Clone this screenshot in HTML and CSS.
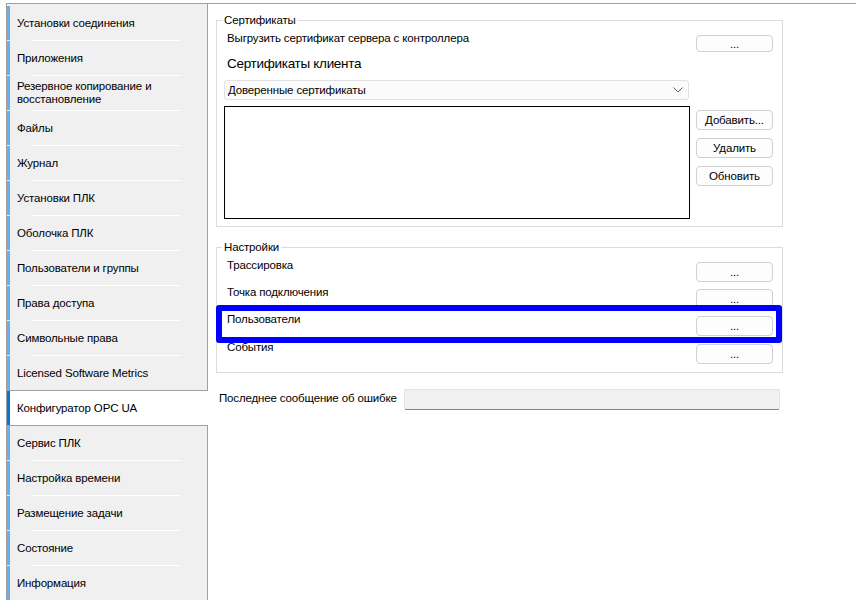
FILE: index.html
```html
<!DOCTYPE html>
<html lang="ru">
<head>
<meta charset="utf-8">
<link rel="stylesheet" href="styles.css">
</head>
<body>
<div class="frame">
  <nav class="sidebar">
    <div class="item">Установки соединения</div>
    <div class="item">Приложения</div>
    <div class="item">Резервное копирование и<br>восстановление</div>
    <div class="item">Файлы</div>
    <div class="item">Журнал</div>
    <div class="item">Установки ПЛК</div>
    <div class="item">Оболочка ПЛК</div>
    <div class="item">Пользователи и группы</div>
    <div class="item">Права доступа</div>
    <div class="item">Символьные права</div>
    <div class="item">Licensed Software Metrics</div>
    <div class="item selected">Конфигуратор OPC UA</div>
    <div class="item">Сервис ПЛК</div>
    <div class="item">Настройка времени</div>
    <div class="item">Размещение задачи</div>
    <div class="item">Состояние</div>
    <div class="item">Информация</div>
  </nav>
  <main class="content">
    <section class="group group-certs">
      <div class="group-title">Сертификаты</div>
      <div class="row">
        <span class="label">Выгрузить сертификат сервера с контроллера</span>
        <button class="btn btn-dots">...</button>
      </div>
      <div class="subtitle">Сертификаты клиента</div>
      <div class="select">
        <span>Доверенные сертификаты</span>
        <svg class="chev" width="10" height="6" viewBox="0 0 10 6"><path d="M0.5 0.5 L5 5 L9.5 0.5" fill="none" stroke="#5a5a5a" stroke-width="1"/></svg>
      </div>
      <div class="listrow">
        <div class="listbox"></div>
        <div class="btncol">
          <button class="btn btn-tall">Добавить...</button>
          <button class="btn btn-tall">Удалить</button>
          <button class="btn btn-tall">Обновить</button>
        </div>
      </div>
    </section>

    <section class="group group-settings">
      <div class="group-title">Настройки</div>
      <div class="row srow">
        <span class="label">Трассировка</span>
        <button class="btn btn-set">...</button>
      </div>
      <div class="row srow">
        <span class="label">Точка подключения</span>
        <button class="btn btn-set">...</button>
      </div>
      <div class="row srow">
        <span class="label">Пользователи</span>
        <button class="btn btn-set">...</button>
      </div>
      <div class="row srow srow-last">
        <span class="label">События</span>
        <button class="btn btn-set">...</button>
      </div>
    </section>

    <div class="errrow">
      <span class="errlabel">Последнее сообщение об ошибке</span>
      <div class="errfield"></div>
    </div>

    <div class="highlight"></div>
  </main>
</div>
</body>
</html>
```

FILE: styles.css
```css
* { box-sizing: border-box; }
html, body { margin: 0; padding: 0; background: #fff; }
body {
  font-family: "Liberation Sans", Arial, sans-serif;
  font-size: 11.5px;
  letter-spacing: -0.15px;
  color: #000;
  width: 856px;
  height: 600px;
  overflow: hidden;
}
.frame {
  margin: 3px 0 0 6px;
  border-top: 1px solid #a0a0a0;
  border-left: 1px solid #a0a0a0;
  display: flex;
  height: 597px;
}
.sidebar {
  width: 201px;
  flex: none;
  background: #f0f0f0;
  border-right: 1px solid #a0a0a0;
  padding-top: 2px;
  display: flex;
  flex-direction: column;
}
.item {
  height: 35px;
  flex: none;
  padding: 0 0 1px 10px;
  display: flex;
  align-items: center;
  line-height: 13px;
  white-space: nowrap;
  background:
    linear-gradient(#fff, #fff) 25px 100% / 149px 1px no-repeat,
    linear-gradient(#6aaef0, #6aaef0) 0 0 / 3px 34px no-repeat;
}
.item.selected {
  margin: -1px -1px 0 0;
  height: 36px;
  padding-bottom: 0;
  border-top: 1px solid #a0a0a0;
  border-bottom: 1px solid #a0a0a0;
  background:
    linear-gradient(#0078d7, #0078d7) 0 0 / 3px 34px no-repeat,
    #fff;
}
.content {
  flex: 1;
  position: relative;
  background: #fff;
}
.group {
  margin-left: 8px;
  width: 567px;
  border: 1px solid #dcdcdc;
  padding: 0 9px 0 7px;
  display: flex;
  flex-direction: column;
}
.group-certs { margin-top: 16px; padding-bottom: 7px; }
.group-settings { margin-top: 20px; padding-bottom: 8px; }
.group-title {
  align-self: flex-start;
  margin: -8px 0 0 -2px;
  padding: 0 2px;
  background: #fff;
  line-height: 14px;
}
.row {
  display: flex;
  align-items: flex-start;
  justify-content: space-between;
  margin-top: 4px;
}
.label {
  padding-left: 3px;
  line-height: 14px;
  white-space: nowrap;
}
.btn {
  font: inherit;
  letter-spacing: inherit;
  color: #000;
  background: #fdfdfd;
  border: 1px solid #d0d0d0;
  border-radius: 4px;
  padding: 0;
  width: 77px;
  margin: 0;
  line-height: 14px;
}
.btn-dots { height: 17px; margin-top: 4px; line-height: 12px; }
.btn-set { height: 20px; margin-top: 4px; line-height: 14px; }
.srow + .srow { margin-top: 3px; }
.srow + .srow-last { margin-top: 4px; }
.subtitle {
  margin-top: 3px;
  padding-left: 3px;
  font-size: 13.5px;
  letter-spacing: -0.3px;
  line-height: 18px;
}
.select {
  margin-top: 7px;
  width: 465px;
  height: 20px;
  background: #fbfbfb;
  border: 1px solid #e1e1e1;
  border-radius: 3px;
  display: flex;
  align-items: center;
  justify-content: space-between;
  padding: 0 5px 0 3px;
}
.chev { flex: none; }
.listrow {
  margin-top: 6px;
  display: flex;
  gap: 6px;
}
.listbox {
  width: 466px;
  height: 113px;
  border: 1px solid #000;
  background: #fff;
}
.btncol {
  display: flex;
  flex-direction: column;
  gap: 8px;
  padding-top: 4px;
}
.btn-tall { height: 20px; }
.errrow {
  margin: 16px 0 0 11px;
  width: 561px;
  display: flex;
  align-items: center;
  justify-content: space-between;
}
.errlabel {
  flex: none;
  line-height: 14px;
  margin-top: -3px;
  white-space: nowrap;
}
.errfield {
  width: 376px;
  height: 21px;
  flex: none;
  background: #f0f0f0;
  border: 1px solid #e3e3e3;
  border-bottom-color: #868686;
  border-radius: 2px;
}
.highlight {
  position: absolute;
  left: 8px;
  top: 301px;
  width: 566px;
  height: 38px;
  border: 6px solid #0000ff;
  border-radius: 3px;
}
```
